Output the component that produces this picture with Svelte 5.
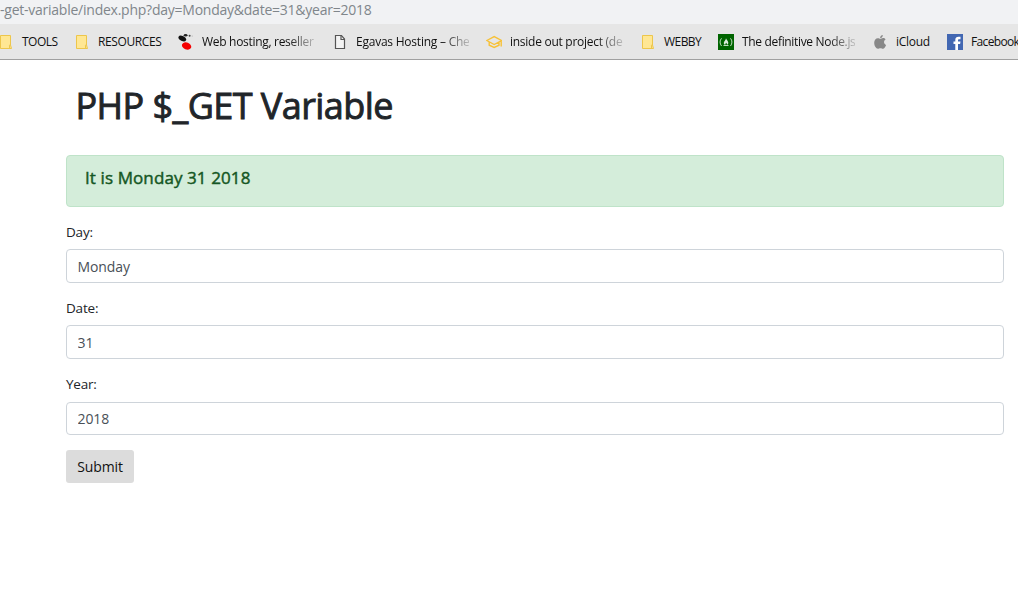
<script>
  const bookmarks = [
    { label: 'TOOLS', icon: 'folder', width: 76, spacing: -0.5 },
    { label: 'RESOURCES', icon: 'folder', width: 104, spacing: -0.4 },
    { label: 'Web hosting, reseller', icon: 'dots', width: 154, fade: true, spacing: -0.3 },
    { label: 'Egavas Hosting – Che', icon: 'file', width: 154, fade: true, spacing: -0.23 },
    { label: 'inside out project (de', icon: 'cap', width: 154, fade: true, spacing: -0.27 },
    { label: 'WEBBY', icon: 'folder', width: 78, spacing: -0.55 },
    { label: 'The definitive Node.js', icon: 'camp', width: 154, fade: true, spacing: -0.33 },
    { label: 'iCloud', icon: 'apple', width: 75, spacing: -0.3 },
    { label: 'Facebook', icon: 'facebook', width: 71, spacing: -0.65 }
  ];

  let fields = $state([
    { id: 'day', label: 'Day:', value: 'Monday' },
    { id: 'date', label: 'Date:', value: '31' },
    { id: 'year', label: 'Year:', value: '2018' }
  ]);
</script>

<div class="window">
  <div class="address"><span>-get-variable/index.php?day=Monday&amp;date=31&amp;year=2018</span></div>
  <nav class="bookmarks">
    {#each bookmarks as b}
      <div class="bookmark" style="width: {b.width}px">
        <svg width="16" height="16" viewBox="0 0 16 16">
          {#if b.icon === 'folder'}
            <path d="M2.500 1.500h10v9.500l1 3.500h-11z" fill="#ffe793" stroke="#edc64b" />
            <path d="M11.500 14.200v-3l1-1" fill="none" stroke="#edc64b" />
          {:else if b.icon === 'dots'}
            <ellipse cx="4.3" cy="4.6" rx="4.1" ry="2.5" transform="rotate(25 4.3 4.6)" fill="#111" />
            <ellipse cx="8.6" cy="12" rx="4.8" ry="3.5" transform="rotate(22 8.6 12)" fill="#f50000" />
            <ellipse cx="7.6" cy="1.2" rx="1.9" ry="1.2" fill="#222" />
            <circle cx="11.6" cy="1.7" r="1" fill="#444" />
            <circle cx="14.2" cy="2" r=".6" fill="#aaa" />
          {:else if b.icon === 'file'}
            <path d="M3.500 1.500h6l3 3.500v9.500h-9z" fill="#f4f4f4" stroke="#555" stroke-width="1.2" />
            <path d="M9 1.500V5.500h3.500" fill="none" stroke="#555" stroke-width="1.2" />
          {:else if b.icon === 'cap'}
            <path d="M.8 6.500 8.200 2.600l7.300 3.900-7.300 4z M3.200 8v3.200l5 2.300 4.800-2.300V8 M15.200 6.500v6" fill="none" stroke="#f7c137" stroke-width="1.4" />
          {:else if b.icon === 'camp'}
            <path d="M0 0h16v16H0z" fill="#006400" />
            <path d="M3.500 4.300C1.600 6.600 1.600 9.500 3.500 12M12.500 4.300c1.900 2.300 1.900 5.200 0 7.700M5.500 11.500h5" fill="none" stroke="#bddabd" />
            <path d="M8 4.300c.2 1.500 2.300 2.500 2.300 4.500 0 1.100-.7 1.900-1.500 2 .4-.9-.1-1.500-.7-2-.2.900-1.100 1.200-.7 2-1-.2-1.600-1-1.600-1.900C5.800 7.300 8 6.300 8 4.300z" fill="#dcebdc" />
          {:else if b.icon === 'apple'}
            <path d="M10.800 1c.1 1.700-1.200 3.100-2.700 3.200C8 2.600 9.300 1.200 10.800 1zM8.300 4.900c.7 0 1.500-.8 2.700-.8 1.100 0 2 .5 2.600 1.400-2.300 1.400-1.900 4.500.5 5.400-.6 1.700-1.800 3.900-3.200 3.900-.9 0-1.300-.6-2.500-.6s-1.600.6-2.500.6C4 14.800 2.200 11.700 2.200 8.800c0-2.900 1.700-4.600 3.600-4.600 1.100 0 1.900.7 2.500.7z" fill="#888" />
          {:else}
            <path d="M0 0h16v16H0z" fill="#4267b2" />
            <path d="M8.300 16V10H6.500V7.500h1.800V6c0-2.200 1.200-3.200 3.200-3.200h2V5.200h-1.300c-.9 0-1.200.4-1.200 1.100v1.200h2.500L13.100 10H11v6z" fill="#fff" />
          {/if}
        </svg>
        <span class:fade={b.fade} style="letter-spacing: {b.spacing}px">{b.label}</span>
      </div>
    {/each}
  </nav>

  <main>
    <h1>PHP $_GET Variable</h1>
    <div class="alert"><span>It is Monday 31 2018</span></div>
    <form onsubmit={(e) => e.preventDefault()}>
      {#each fields as f}
        <div class="group">
          <label for={f.id}>{f.label}</label>
          <input id={f.id} type="text" bind:value={f.value} />
        </div>
      {/each}
      <button type="submit">Submit</button>
    </form>
  </main>
</div>

<style>
  :global(body) { margin: 0; background: #fff; }
  .window {
    width: 1018px;
    height: 610px;
    overflow: hidden;
    font-family: "Open Sans", "Noto Sans", sans-serif;
    color: #212529;
  }
  .address {
    height: 24px;
    background: #f1f2f4;
    color: #80868b;
    font-size: 14px;
    line-height: 20px;
    letter-spacing: -0.24px;
    white-space: nowrap;
  }
  .bookmarks {
    box-sizing: border-box;
    height: 36px;
    display: flex;
    align-items: center;
    background: #e6e6e6;
    border-bottom: 1px solid #a0a0a0;
  }
  .bookmark {
    flex: none;
    display: flex;
    align-items: center;
    gap: 8px;
    font-size: 12px;
    line-height: 18px;
    color: #111;
    white-space: nowrap;
  }
  .bookmark:first-child { margin-left: -2px; }
  .bookmark svg { flex: none; }
  .fade {
    width: 113px;
    overflow: hidden;
    mask-image: linear-gradient(to right, #000 86px, transparent 119px);
  }
  main { padding: 22px 14px 0 66px; }
  h1 {
    margin: 0;
    padding-left: 9.5px;
    height: 73px;
    font-size: 36px;
    line-height: 48px;
    font-weight: 400;
    -webkit-text-stroke: 0.9px currentColor;
    letter-spacing: -0.56px;
    white-space: nowrap;
  }
  .alert {
    box-sizing: border-box;
    height: 52px;
    padding: 11px 18px;
    border: 1px solid #bfe3c9;
    border-radius: 4px;
    background: #d4edda;
    color: #155724;
    font-size: 17px;
    line-height: 22px;
    font-weight: 400;
    -webkit-text-stroke: 0.45px currentColor;
    letter-spacing: 0.1px;
  }
  form { padding-top: 14px; }
  .group { height: 76.2px; }
  label {
    display: block;
    height: 28px;
    font-size: 13.5px;
    line-height: 22px;
    letter-spacing: -0.2px;
  }
  input {
    display: block;
    box-sizing: border-box;
    width: 100%;
    height: 34px;
    padding: 0 11px 0 10.5px;
    border: 1px solid #ced4da;
    border-radius: 4px;
    background: #fff;
    color: #495057;
    font: 14px "Open Sans", "Noto Sans", sans-serif;
    letter-spacing: -0.1px;
    outline: none;
  }
  .group:last-of-type input { height: 33px; margin-top: 1px; }
  button {
    display: block;
    width: 68px;
    height: 33px;
    padding: 0;
    border: 0;
    border-radius: 3px;
    background: #dcdcdc;
    color: #111;
    font: 14px "Open Sans", "Noto Sans", sans-serif;
    letter-spacing: -0.1px;
  }
</style>
